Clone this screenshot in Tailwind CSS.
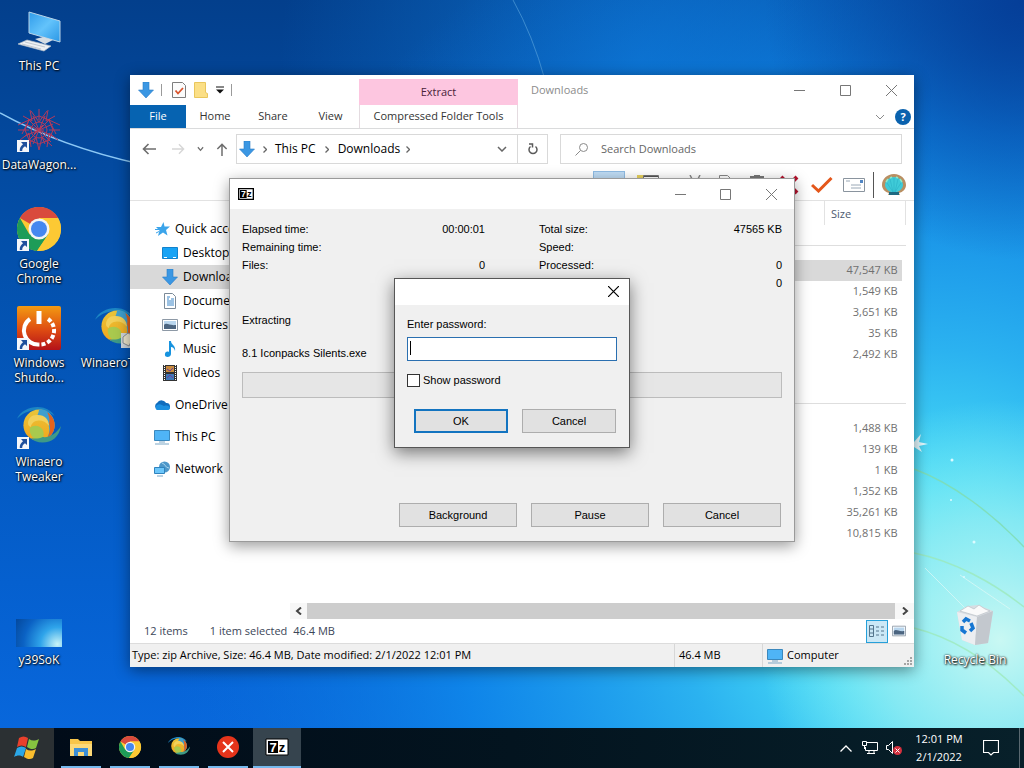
<!DOCTYPE html>
<html lang="en">
<head>
  <meta charset="UTF-8" />
  <meta name="viewport" content="width=device-width, initial-scale=1.0"/>
  <title>Downloads</title>
  <!-- Tailwind CSS -->
  <script src="https://cdn.jsdelivr.net/npm/@tailwindcss/browser@4"></script>
</head>
<body class="h-screen overflow-hidden flex flex-col bg-[#0358b4] font-['Open_Sans','Noto_Sans',sans-serif] text-xs text-[#1a1a1a]">

  <!-- Shared icons -->
  <svg class="absolute size-0" aria-hidden="true">
    <defs>
      <linearGradient id="screen" x1="0" y1="0" x2="1" y2="1">
        <stop offset="0" stop-color="#2f9bea"/><stop offset=".5" stop-color="#63c3fb"/><stop offset="1" stop-color="#2b97e6"/>
      </linearGradient>
      <linearGradient id="swirlGold" x1="0" y1="0" x2="0" y2="1">
        <stop offset="0" stop-color="#e8c53a"/><stop offset="1" stop-color="#f3a51c"/>
      </linearGradient>
      <linearGradient id="power" x1="0" y1="0" x2="0" y2="1">
        <stop offset="0" stop-color="#f39a12"/><stop offset=".55" stop-color="#dd4a12"/><stop offset="1" stop-color="#b3121a"/>
      </linearGradient>
    </defs>
    <symbol id="arrow" viewBox="0 0 16 16">
      <path d="M5 0h6v8h4.500L8 16 .5 8H5z" fill="#3b97e3" stroke="#2a7cc7" stroke-width=".6"/>
    </symbol>
    <symbol id="chrome" viewBox="0 0 48 48">
      <circle cx="24" cy="24" r="22" fill="#fcc934"/>
      <path d="M24 24 4.900 13A22 22 0 0 1 43.100 13H24z" fill="#d94a3d"/>
      <path d="M4.900 13A22 22 0 0 0 22 45.900L33 29.500 24 24 14.500 29.500z" fill="#1e9c58"/>
      <path d="M22 45.900A22 22 0 0 0 43.100 13H24L33.500 29.500z" fill="#fcc934"/>
      <circle cx="24" cy="24" r="10.500" fill="#f4f4f4"/>
      <circle cx="24" cy="24" r="8" fill="#4587f0"/>
    </symbol>
    <symbol id="winaero" viewBox="0 0 48 48">
      <path d="M0 15C4 5 18 0 29 3c6 2 10 5 12 9-8-6-16-8-24-6C10 7 4 11 0 15z" fill="#1c86c4"/>
      <circle cx="24" cy="22" r="17" fill="url(#swirlGold)"/>
      <path d="M24 5c10-1 17 7 17 17 0 6-3 11-8 14 3-6 3-12 0-17-3-4-7-6-12-5 2-4 3-7 3-9z" fill="#3f9fce"/>
      <path d="M33 8c5 3 8 8 8 14s-3 11-8 14c3-5 4-11 2-16 1-4 0-8-2-12z" fill="#e4621c"/>
      <path d="M12 20c0-6 5-10 11-9 7 0 12 5 12 12-3-4-7-6-11-6-5 0-8 3-9 7-2-1-3-2-3-4z" fill="#f2d05a"/>
      <path d="M14 25c4-4 11-3 14 2 2 4 1 9-1 12-8 0-14-6-13-14z" fill="#a9c94e"/>
      <path d="M28 35c8 1 15-4 20-12-2 12-10 18-20 18-6 0-10-2-13-5 4 1 9 1 13-1z" fill="#3f9a86"/>
    </symbol>
    <symbol id="shortcut" viewBox="0 0 12 12">
      <path d="M0 0h12v12H0z" fill="#f4f6fa"/>
      <path d="M4 2h6v6L8 6.200C6 7.500 5.200 8.800 5.200 11H2.800C2.500 8.300 3.700 6 6 4.200z" fill="#1f4f9c"/>
    </symbol>
    <symbol id="monitor" viewBox="0 0 16 16">
      <path d="M.5 1.500h15v10H.5z" fill="#4fb4f6" stroke="#3b88bd"/>
      <path d="M5 13h6M1 15h14" stroke="#7aa7c6"/>
    </symbol>
    <symbol id="picture" viewBox="0 0 16 12">
      <path d="M.5.500h15v11H.5z" fill="#fff" stroke="#8d99a6"/>
      <path d="M2 2h12v8H2z" fill="#b9d6ee"/><path d="M2 6c3-3 5 1 12 0v4H2z" fill="#4c6580"/>
    </symbol>
  </svg>

  <!-- Desktop -->
  <main class="relative flex-1 min-h-0">
    <!-- Wallpaper -->
    <svg class="absolute inset-0 size-full" viewBox="0 0 1024 728" preserveAspectRatio="none" aria-hidden="true">
      <defs>
        <linearGradient id="sky" x1="0" y1="0" x2="0" y2="1">
          <stop offset="0" stop-color="#033f8c"/><stop offset=".35" stop-color="#0350ab"/><stop offset=".8" stop-color="#0560cf"/><stop offset="1" stop-color="#0867dc"/>
        </linearGradient>
        <radialGradient id="top" gradientUnits="userSpaceOnUse" cx="640" cy="60" r="360">
          <stop offset="0" stop-color="#0b69c2"/><stop offset="1" stop-color="#0b69c2" stop-opacity="0"/>
        </radialGradient>
        <radialGradient id="corner" gradientUnits="userSpaceOnUse" cx="1024" cy="0" r="260">
          <stop offset="0" stop-color="#053e98"/><stop offset="1" stop-color="#053e98" stop-opacity="0"/>
        </radialGradient>
        <radialGradient id="glow" gradientUnits="userSpaceOnUse" cx="930" cy="600" r="760">
          <stop offset="0" stop-color="#6aeef8"/><stop offset=".15" stop-color="#48dcf6"/><stop offset=".33" stop-color="#2bb2f0"/><stop offset=".62" stop-color="#108aec" stop-opacity=".85"/><stop offset="1" stop-color="#0a70da" stop-opacity="0"/>
        </radialGradient>
        <radialGradient id="shine" gradientUnits="userSpaceOnUse" cx="1000" cy="640" r="240">
          <stop offset="0" stop-color="#c9f8f3"/><stop offset=".5" stop-color="#98edf2" stop-opacity=".75"/><stop offset="1" stop-color="#7feef5" stop-opacity="0"/>
        </radialGradient>
      </defs>
      <path d="M0 0h1024v728H0z" fill="url(#sky)"/>
      <path d="M0 0h1024v728H0z" fill="url(#top)"/>
      <path d="M0 0h1024v728H0z" fill="url(#glow)"/>
      <path d="M0 0h1024v728H0z" fill="url(#shine)"/>
      <path d="M0 0h1024v728H0z" fill="url(#corner)"/>
      <g fill="none">
        <path d="M0 113c40 22 85 39 140 51" stroke="#8cc8f5" stroke-width="1.500"/>
        <path d="M513 0q20 36 32 80" stroke="#5fa8e0" opacity=".6"/>
        <path d="M914 469c38 14 78 44 110 78" stroke="#7fdcae" stroke-width="1.500" opacity=".8"/>
        <path d="M914 553c40 8 80 30 110 54M914 628c40 10 78 35 110 68" stroke="#9be8b4" stroke-width="1.500" opacity=".7"/>
        <path d="M925 568l45 45M960 575l50 34" stroke="#dffaf6" opacity=".7"/>
      </g>
      <path d="M914 442l7-8-2 8 9 2-9 2 3 6-8-5z" fill="#e4faff"/>
      <g fill="#dcfbff"><circle cx="952" cy="460" r="1.500"/><circle cx="974" cy="542" r="1.500"/><circle cx="964" cy="577" r="1"/><circle cx="951" cy="500" r="1"/></g>
    </svg>

    <!-- Desktop icons -->
    <ul class="absolute top-0 left-0 grid grid-flow-col grid-rows-[repeat(7,99px)] auto-cols-[78px] text-center text-white leading-[15px] [text-shadow:1px_1px_2px_#000,0_0_2px_#000]">
      <li class="row-start-1 col-start-1 pt-[9px] flex flex-col items-center gap-[5px]">
        <svg class="size-11 shrink-0" viewBox="0 0 44 44">
          <path d="M12 3 43 12v21L12 24z" fill="url(#screen)" stroke="#b9d4e8"/>
          <path d="M18 30l8-2 10 3-8 4z" fill="#d5dde4"/>
          <path d="M1 35l9-4 24 6-7 5z" fill="#eef1f4" stroke="#b5bfc9" stroke-width=".7"/>
          <path d="M5 35l19 5M8 33l20 5" stroke="#aeb8c2" stroke-width=".7"/>
        </svg>
        <span>This PC</span>
      </li>
      <li class="row-start-2 col-start-1 pt-[9px] flex flex-col items-center gap-[5px]">
        <span class="relative size-11 shrink-0">
          <svg class="size-11" viewBox="0 0 44 44" fill="none" stroke="#b23a5c">
            <path d="M22 1v11M14 3l8 11 8-11M6 8l9 5-2-11M38 8l-9 5 2-11M1 17l11-5-7 14M43 17l-11-5 7 14M1 22h11M43 22H32M3 32l9-7 2 14M41 32l-9-7-2 14M9 38l10-9 3 13 3-13 10 9"/>
            <path d="M10 10l24 24M34 10 10 34M12 12l10-4 10 4 4 10-4 10-10 4-10-4-4-10z"/>
            <circle cx="22" cy="22" r="8"/><path d="M18 18l8 8M26 17l-9 9M17 22h10M8 16l28 12M8 28l28-12M16 8l12 28M28 8 16 36"/>
          </svg>
          <svg class="absolute left-0 bottom-0 size-3"><use href="#shortcut"/></svg>
        </span>
        <span>DataWagon...</span>
      </li>
      <li class="row-start-3 col-start-1 pt-[9px] flex flex-col items-center gap-[5px]">
        <span class="relative size-11 shrink-0">
          <svg class="size-11" viewBox="2 2 44 44"><use href="#chrome" width="48" height="48"/></svg>
          <svg class="absolute left-0 bottom-0 size-3"><use href="#shortcut"/></svg>
        </span>
        <span>Google<br/>Chrome</span>
      </li>
      <li class="row-start-4 col-start-1 pt-[9px] flex flex-col items-center gap-[5px]">
        <span class="relative size-11 shrink-0">
          <svg class="size-11" viewBox="0 0 44 44" fill="none" stroke="#fff">
            <rect width="44" height="44" rx="2" fill="url(#power)" stroke="none"/>
            <path d="M13 13a14 14 0 0 0 9 25.500" stroke-width="4"/>
            <path d="M31 13a14 14 0 0 1-9 25.500" stroke-width="4" stroke-dasharray="4 2"/>
            <path d="M22 5v13" stroke-width="5"/>
          </svg>
          <svg class="absolute left-0 bottom-0 size-3"><use href="#shortcut"/></svg>
        </span>
        <span>Windows<br/>Shutdo...</span>
      </li>
      <li class="row-start-5 col-start-1 pt-[9px] flex flex-col items-center gap-[5px]">
        <span class="relative size-11 shrink-0">
          <svg class="size-11"><use href="#winaero"/></svg>
          <svg class="absolute left-0 bottom-0 size-3"><use href="#shortcut"/></svg>
        </span>
        <span>Winaero<br/>Tweaker</span>
      </li>
      <li class="row-start-7 col-start-1 pt-[9px] flex flex-col items-center gap-[5px]">
        <span class="h-11 shrink-0 flex items-end">
          <span class="w-[46px] h-7 bg-[radial-gradient(circle_at_90%_90%,#c8f4f8,#2fa4ea_35%,#0b62c4_70%,#04489c)]"></span>
        </span>
        <span>y39SoK</span>
      </li>
      <li class="row-start-4 col-start-2 pt-[9px] flex flex-col items-center gap-[5px]">
        <span class="relative size-11 shrink-0">
          <svg class="size-11"><use href="#winaero"/></svg>
          <svg class="absolute right-0 bottom-0 size-5" viewBox="0 0 20 20"><path d="M2 3h14v15H2z" fill="#cfd6dc"/><path d="M4 7l5-4 6 3-5 10-6-3z" fill="#f1ead0" stroke="#8b9097"/></svg>
        </span>
        <span>WinaeroTw...</span>
      </li>
    </ul>
    <div class="absolute top-[594px] right-[10px] w-[78px] pt-[9px] flex flex-col items-center gap-[5px] text-white leading-[15px] [text-shadow:1px_1px_2px_#000,0_0_2px_#000]">
      <svg class="size-11" viewBox="0 0 44 44">
        <path d="M4 9 15 3l10-1 15 6-5 32-13 2L9 37z" fill="#d9dde2"/>
        <path d="M4 9l20 5-2 28L9 37z" fill="#eceef1"/><path d="M24 14 40 8l-5 32-13 2z" fill="#c3c8ce"/>
        <path d="M7 8l8-5 6 3 5-4 6 4 5 2-13 5z" fill="#fafafa" stroke="#b4bac1" stroke-width=".6"/>
        <path d="M10 19l3-3 4 2M18 20l2 5-3 3M13 30l-4-3 0-4" fill="none" stroke="#1676d2" stroke-width="3.500"/>
      </svg>
      <span>Recycle Bin</span>
    </div>

    <!-- Explorer window -->
    <section aria-label="Downloads" class="absolute left-[130px] top-[75px] w-[784px] bg-white flex flex-col shadow-[0_3px_14px_rgba(0,0,0,0.45)]">
      <header class="flex h-[30px] items-center pl-2">
        <svg class="size-4"><use href="#arrow"/></svg>
        <span class="ml-[7px] w-px h-3 bg-[#9a9a9a]"></span>
        <svg class="ml-2.5 w-[14px] h-4" viewBox="0 0 14 16"><path d="M.5.500h10l3 3v12H.5z" fill="#fbfbfb" stroke="#7d7d7d"/><path d="M3.500 8.500l2.500 3L11 6" fill="none" stroke="#d9532c" stroke-width="1.800"/></svg>
        <svg class="ml-2 w-[14px] h-4" viewBox="0 0 14 16"><path d="M.5.500h11v10l2 1v4H.5z" fill="#fbdf86" stroke="#e9c65c"/></svg>
        <svg class="ml-2 size-2" viewBox="0 0 8 8"><path d="M0 1h8" stroke="#111"/><path d="M0 3.500h8l-4 4z" fill="#111"/></svg>
        <span class="ml-[7px] w-px h-3 bg-[#9a9a9a]"></span>
        <span class="ml-[127px] mt-1 w-[159px] h-[26px] bg-[#fdc6e0] flex items-center justify-center text-[11px] text-[#4a2238]">Extract</span>
        <span class="ml-[13px] text-[11px] text-[#8c8c8c]">Downloads</span>
        <div class="ml-auto flex h-7 text-[#777]">
          <button aria-label="Minimize" class="w-[46px] flex items-center justify-center"><svg class="size-[11px]" viewBox="0 0 11 11" stroke="currentColor"><path d="M0 5.500h11"/></svg></button>
          <button aria-label="Maximize" class="w-[46px] flex items-center justify-center"><svg class="size-[11px]" viewBox="0 0 11 11" fill="none" stroke="currentColor"><path d="M.5.500h10v10H.5z"/></svg></button>
          <button aria-label="Close" class="w-[46px] flex items-center justify-center"><svg class="size-[11px]" viewBox="0 0 11 11" stroke="currentColor"><path d="M0 0l11 11M11 0 0 11"/></svg></button>
        </div>
      </header>

      <!-- Ribbon tabs -->
      <nav class="flex h-6 items-stretch border-b border-[#dadbdc] text-[11px] text-[#333]">
        <button class="w-14 bg-[#0663b1] text-white">File</button>
        <button class="w-[58px]">Home</button>
        <button class="w-[58px]">Share</button>
        <button class="w-[57px]">View</button>
        <button class="w-[159px] border-x border-[#e4dbe0]">Compressed Folder Tools</button>
        <svg class="ml-auto mr-2.5 w-2.5 self-center" viewBox="0 0 10 6" fill="none" stroke="#8a8a8a"><path d="M1 1l4 4 4-4"/></svg>
        <button aria-label="Help" class="mr-[3px] size-4 self-center rounded-full bg-[#0a62ae] text-white font-bold leading-4">?</button>
      </nav>

      <!-- Address bar -->
      <div class="flex h-10 items-center pr-3">
        <div class="flex w-[106px] shrink-0 items-center pl-3 gap-3 text-[#6d6d6d]">
          <svg class="w-[14px] h-3" viewBox="0 0 14 12" fill="none" stroke="currentColor" stroke-width="1.600"><path d="M14 6H1.500M6.500 1l-5 5 5 5"/></svg>
          <svg class="ml-1 w-[13px] h-3" viewBox="0 0 14 12" fill="none" stroke="#d6d6d6" stroke-width="1.500"><path d="M0 6h12.500M7.500 1l5 5-5 5"/></svg>
          <svg class="w-[7px] h-1.5" viewBox="0 0 8 6" fill="none" stroke="currentColor" stroke-width="1.400"><path d="M1 1l3 3.500L7 1"/></svg>
          <svg class="w-3 h-[13px]" viewBox="0 0 12 14" fill="none" stroke="currentColor" stroke-width="1.600"><path d="M6 14V1.500M1 6.500l5-5 5 5"/></svg>
        </div>
        <div class="flex w-[312px] h-[30px] shrink-0 items-center border border-[#d9d9d9] pl-0.5">
          <svg class="size-4"><use href="#arrow"/></svg>
          <svg class="mx-2 w-1 h-[7px]" viewBox="0 0 4 7" fill="none" stroke="#666" stroke-width="1.300"><path d="M.5.500l3 3-3 3"/></svg>
          <a href="#" class="text-black">This PC</a>
          <svg class="mx-[9px] w-1 h-[7px]" viewBox="0 0 4 7" fill="none" stroke="#666" stroke-width="1.300"><path d="M.5.500l3 3-3 3"/></svg>
          <a href="#" class="text-black">Downloads</a>
          <svg class="mx-1.5 w-1 h-[7px]" viewBox="0 0 4 7" fill="none" stroke="#666" stroke-width="1.300"><path d="M.5.500l3 3-3 3"/></svg>
          <svg class="ml-auto mr-2.5 w-2.5 h-1.5" viewBox="0 0 10 6" fill="none" stroke="#666" stroke-width="1.500"><path d="M1 1l4 4 4-4"/></svg>
          <button aria-label="Refresh" class="w-[30px] h-full border-l border-[#d9d9d9] flex items-center justify-center">
            <svg class="size-3" viewBox="0 0 12 12" fill="none" stroke="#5a5a5a" stroke-width="1.500"><path d="M8.500 3.500a4 4 0 1 1-5 0M2 1h3.500v3.500"/></svg>
          </button>
        </div>
        <label class="ml-3 flex flex-1 h-[30px] items-center border border-[#d9d9d9] pl-3.5 gap-3">
          <svg class="size-3.5" viewBox="0 0 14 14" fill="none" stroke="#8a8a8a"><circle cx="8.500" cy="5.500" r="4"/><path d="M5.500 8.500.5 13.500"/></svg>
          <input type="search" aria-label="Search Downloads" placeholder="Search Downloads" class="flex-1 text-[11px] outline-none placeholder:text-[#666]"/>
        </label>
      </div>

      <!-- Classic toolbar -->
      <div class="flex h-8 items-center justify-end gap-3 border-b border-[#e2e2e2] pr-2">
        <span class="w-8 h-7 bg-[#bfdcf5] border border-[#8fbce4]"></span>
        <svg class="w-[22px] h-5" viewBox="0 0 22 20"><path d="M0 0h8v20H0z" fill="#e8d25e"/><path d="M6.500.500h15v18h-15z" fill="#fff" stroke="#777"/><path d="M7 1.500h14" stroke="#555"/></svg>
        <svg class="ml-4 w-4 h-5" viewBox="0 0 16 20" stroke="#888" stroke-width="1.500"><path d="M3 0l8 16M13 0 5 16"/></svg>
        <svg class="w-5 h-5" viewBox="0 0 20 20" fill="#fff" stroke="#888"><path d="M4.500.500h8l3 3v14h-11z"/></svg>
        <svg class="w-5 h-5" viewBox="0 0 20 20"><path d="M3 1h4V0h6v1h4v18H3z" fill="#777"/></svg>
        <svg class="size-5" viewBox="0 0 20 20" stroke="#b5122d" stroke-width="4"><path d="M2 2l16 16M18 2 2 18"/></svg>
        <svg class="-mr-0.5 w-[22px] h-4" viewBox="0 0 22 16" fill="none" stroke="#e4571b" stroke-width="3"><path d="M1 8l6.500 6L20.500 1"/></svg>
        <svg class="w-[22px] h-[14px]" viewBox="0 0 22 14" fill="none"><path d="M.5.500h21v13H.5z" fill="#fff" stroke="#8a949e"/><path d="M3 3h4M8 7h10M8 10h10" stroke="#9aa8b6"/><path d="M17 2h3v3h-3z" fill="#5186c4"/></svg>
        <div class="flex items-center gap-2 -ml-1">
          <span class="w-px h-[26px] bg-[#555]"></span>
          <svg class="size-6" viewBox="0 0 24 24"><path d="M12 1c7 0 12 5 12 11 0 4-3 7-7 8l1 2H6l1-2c-4-1-7-4-7-8C0 6 5 1 12 1z" fill="#b98f62"/><path d="M12 4c5 0 9 4 9 8 0 3-3 6-6 7H9c-3-1-6-4-6-7 0-4 4-8 9-8z" fill="#3fcbd8"/><path d="M12 5v14M8 6l3 13M16 6l-3 13M5 10l6 9M19 10l-6 9" stroke="#2db4c8" stroke-width=".7"/><path d="M4 9l2-3M8 5l2-1M14 4l2 1M18 6l2 3" stroke="#8be8c8" stroke-width="1.500"/><path d="M7 19h10v3H7z" fill="#1f6a82"/></svg>
        </div>
      </div>

      <div class="flex">
        <!-- Navigation pane -->
        <ul class="w-40 shrink-0 pt-4 text-black [&>li]:flex [&>li]:h-6 [&>li]:items-center [&>li]:gap-[5px] [&>li]:whitespace-nowrap">
          <li class="pl-6"><svg class="size-4" viewBox="0 0 16 16"><path d="M9.500 1l1 4.500H16L12 9l1.500 5.500L9 11.500 4 15l1.500-5.500L2 6h5z" fill="#3ba4ea"/><path d="M1 8.500h4M2 12l3-1.500" stroke="#3ba4ea"/></svg>Quick access</li>
          <li class="pl-8"><svg class="size-4" viewBox="0 0 16 16"><path d="M.5 2.500h15v11H.5z" fill="#17a3f5" stroke="#1282cc"/><path d="M2 12.500h3M11 12.500h3" stroke="#fff"/></svg>Desktop</li>
          <li class="pl-8 bg-[#d9d9d9]"><svg class="size-4"><use href="#arrow"/></svg>Downloads</li>
          <li class="pl-8"><svg class="size-4" viewBox="0 0 16 16"><path d="M2.500.500h8l3 3v12h-11z" fill="#fff" stroke="#7b8a98"/><path d="M5 4h3M5 6h2M9 6h3M5 8h7M5 10h7M5 12h7" stroke="#3a86c8"/></svg>Documents</li>
          <li class="pl-8"><svg class="w-4 h-3"><use href="#picture"/></svg>Pictures</li>
          <li class="pl-8"><svg class="size-4" viewBox="0 0 16 16"><path d="M7 0h2c0 4 5 4 4 10-1-3-2-4-4-4v7c0 4-7 4-6 0 0-2 2-3 4-2z" fill="#1793df"/></svg>Music</li>
          <li class="pl-8"><svg class="size-4" viewBox="0 0 16 16"><path d="M1 0h14v16H1z" fill="#333"/><path d="M4 1h8v6H4z" fill="#c88a3e"/><path d="M4 9h8v6H4z" fill="#3f78b8"/><path d="M5 4l3 2 3-3M5 13l3-3 3 3" stroke="#6b3fa0" fill="none"/><path d="M2.500 0v16M13.500 0v16" stroke="#fff" stroke-dasharray="1 1"/></svg>Videos</li>
          <li class="mt-2 pl-6"><svg class="size-4" viewBox="0 0 16 16"><path d="M4 13a4 4 0 0 1-.5-7.500A5 5 0 0 1 12 6a3.500 3.500 0 0 1 1 7z" fill="#0f6cbd"/><path d="M3 13a3 3 0 0 1 0-5c3-2 5 0 7 1 3-1 6 0 6 2 0 1-1 2-2 2z" fill="#1b8fe0"/></svg>OneDrive</li>
          <li class="mt-2 pl-6"><svg class="size-4"><use href="#monitor"/></svg>This PC</li>
          <li class="mt-2 pl-6"><svg class="size-4" viewBox="0 0 16 16"><circle cx="10.500" cy="6" r="5.500" fill="#4d97c9"/><path d="M8 2c4 1 3 5 7 5" stroke="#a9d6ef" fill="none"/><path d="M.5 6.500h10v6H.5z" fill="#6cc6fa" stroke="#2f83bd"/><path d="M3 15h6" stroke="#7aa7c6"/></svg>Network</li>
        </ul>

        <!-- File list -->
        <div class="flex-1 min-w-0">
          <div class="min-h-[402px] pr-2">
            <table class="w-full table-fixed border-collapse text-right text-[11px] text-[#707070]">
              <colgroup><col/><col class="w-[77px]"/><col class="w-1"/></colgroup>
              <thead>
                <tr class="h-6">
                  <td></td>
                  <th scope="col" class="border-l border-[#e2e2e2] pl-1.5 pt-0.5 text-left font-normal text-[#4c5a70]">Size</th>
                  <td class="border-r border-[#e2e2e2]"></td>
                </tr>
              </thead>
              <tbody class="[&>tr]:h-[21px]">
                <tr><td colspan="3" class="pb-[14px]"><div class="h-[21px] border-b border-[#dedede]"></div></td></tr>
                <tr><td class="bg-[#d9d9d9]"></td><td class="bg-[#d9d9d9] pr-1">47,547 KB</td><td></td></tr>
                <tr><td></td><td class="pr-1">1,549 KB</td><td></td></tr>
                <tr><td></td><td class="pr-1">3,651 KB</td><td></td></tr>
                <tr><td></td><td class="pr-1">35 KB</td><td></td></tr>
                <tr><td></td><td class="pr-1">2,492 KB</td><td></td></tr>
              </tbody>
              <tbody class="[&>tr]:h-[21px]">
                <tr><td colspan="3" class="pb-[14px]"><div class="h-[39px] border-b border-[#dedede]"></div></td></tr>
                <tr><td></td><td class="pr-1">1,488 KB</td><td></td></tr>
                <tr><td></td><td class="pr-1">139 KB</td><td></td></tr>
                <tr><td></td><td class="pr-1">1 KB</td><td></td></tr>
                <tr><td></td><td class="pr-1">1,352 KB</td><td></td></tr>
                <tr><td></td><td class="pr-1">35,261 KB</td><td></td></tr>
                <tr><td></td><td class="pr-1">10,815 KB</td><td></td></tr>
              </tbody>
            </table>
          </div>
          <!-- Horizontal scroll bar -->
          <div class="flex h-4 items-center bg-[#f7f7f7]">
            <svg class="mx-[5px] w-[7px] h-2" viewBox="0 0 7 8" fill="none" stroke="#444" stroke-width="2"><path d="M6 .5 2 4l4 3.500"/></svg>
            <span class="flex-1 h-full bg-[#cdcdcd]"></span>
            <svg class="ml-[7px] mr-[5px] w-[7px] h-2" viewBox="0 0 7 8" fill="none" stroke="#444" stroke-width="2"><path d="M1 .5 5 4 1 7.500"/></svg>
          </div>
        </div>
      </div>

      <!-- Status bars -->
      <div class="flex h-6 items-center pl-[14px] pr-[7px] text-[11px] text-[#3b4658]">
        <span>12 items</span>
        <span class="ml-[22px]">1 item selected</span>
        <span class="ml-1.5">46.4 MB</span>
        <button aria-label="Details" class="ml-auto w-[22px] h-[23px] bg-[#cbe8f6] border border-[#26a0da] flex items-center justify-center">
          <svg class="w-4 h-3" viewBox="0 0 16 12" fill="none" stroke="#54758c"><path d="M.5.500h4v11h-4zM.5 4h4M.5 8h4M7 2h3M12 2h3M7 6h3M12 6h3M7 10h3M12 10h3"/></svg>
        </button>
        <button aria-label="Large icons" class="ml-1 w-[15px]"><svg class="w-[14px] h-3"><use href="#picture"/></svg></button>
      </div>
      <footer class="flex h-6 items-center border-t border-[#dcdcdc] bg-[#f0f0f0] text-[11px] text-black">
        <span class="flex-1 pl-0.5">Type: zip Archive, Size: 46.4 MB, Date modified: 2/1/2022 12:01 PM</span>
        <span class="w-[88px] h-full flex items-center border-l border-[#d7d7d7] pl-1">46.4 MB</span>
        <span class="w-[152px] h-full flex items-center gap-1 border-l border-[#d7d7d7] pl-1">
          <svg class="size-4"><use href="#monitor"/></svg>Computer
          <svg class="ml-auto mr-0.5 mt-2.5 size-2" viewBox="0 0 8 8" fill="#a5a5a5"><path d="M6 0h2v2H6zM3 3h2v2H3zM6 3h2v2H6zM0 6h2v2H0zM3 6h2v2H3zM6 6h2v2H6z"/></svg>
        </span>
      </footer>
    </section>

    <!-- 7-Zip progress window -->
    <section aria-label="Extracting" class="absolute left-[229px] top-[178px] w-[566px] flex flex-col border border-[#9a9a9a] bg-[#f0f0f0] font-['Liberation_Sans',Arial,sans-serif] text-[11px] text-black shadow-[0_4px_14px_rgba(0,0,0,0.4)]">
      <header class="flex h-[30px] items-center bg-white pl-2">
        <svg class="w-4 h-3" viewBox="0 0 24 18" font-family="Liberation Sans" font-weight="700" font-size="13" text-anchor="middle">
          <path d="M1 1h22v16H1z" fill="#fff" stroke="#000" stroke-width="2"/><path d="M3 3h10v12H3z"/>
          <text x="8" y="14" fill="#fff">7</text><text x="17" y="14">z</text>
        </svg>
        <div class="ml-auto flex h-7 text-[#777]">
          <button aria-label="Minimize" class="w-[45px] flex items-center justify-center"><svg class="size-[11px]" viewBox="0 0 11 11" stroke="currentColor"><path d="M0 5.500h11"/></svg></button>
          <button aria-label="Maximize" class="w-[45px] flex items-center justify-center"><svg class="size-[11px]" viewBox="0 0 11 11" fill="none" stroke="currentColor"><path d="M.5.500h10v10H.5z"/></svg></button>
          <button aria-label="Close" class="w-[46px] flex items-center justify-center"><svg class="size-[11px]" viewBox="0 0 11 11" stroke="currentColor"><path d="M0 0l11 11M11 0 0 11"/></svg></button>
        </div>
      </header>
      <div class="px-3 pt-[11px] pb-[14px]">
        <div class="grid grid-cols-2 gap-x-[54px] leading-[18px]">
          <dl class="grid grid-cols-[1fr_auto] auto-rows-[18px]">
            <dt>Elapsed time:</dt><dd>00:00:01</dd>
            <dt>Remaining time:</dt><dd></dd>
            <dt>Files:</dt><dd class="text-right">0</dd>
          </dl>
          <dl class="grid grid-cols-[1fr_auto] auto-rows-[18px]">
            <dt>Total size:</dt><dd>47565 KB</dd>
            <dt>Speed:</dt><dd></dd>
            <dt>Processed:</dt><dd class="text-right">0</dd>
            <dt>Compressed size:</dt><dd class="text-right">0</dd>
          </dl>
        </div>
        <p class="mt-[19px] leading-[18px]">Extracting</p>
        <p class="mt-[15px] leading-[18px]">8.1 Iconpacks Silents.exe</p>
        <div role="progressbar" aria-label="Progress" class="mt-2.5 h-[26px] border border-[#bcbcbc] bg-[#e6e6e6]"></div>
        <div class="mt-[105px] flex justify-end gap-[14px] pr-px">
          <button class="w-[118px] h-6 border border-[#adadad] bg-[#e1e1e1]">Background</button>
          <button class="w-[118px] h-6 border border-[#adadad] bg-[#e1e1e1]">Pause</button>
          <button class="w-[118px] h-6 border border-[#adadad] bg-[#e1e1e1]">Cancel</button>
        </div>
      </div>
    </section>

    <!-- Password dialog -->
    <form role="dialog" aria-label="Enter password" onsubmit="return false" class="absolute left-[394px] top-[278px] w-[236px] flex flex-col border border-[#565656] bg-[#f0f0f0] font-['Liberation_Sans',Arial,sans-serif] text-[11px] text-black shadow-[0_5px_16px_rgba(0,0,0,0.5)]">
      <header class="flex h-[26px] justify-end bg-white">
        <button type="button" aria-label="Close" class="w-[31px] h-6 flex items-center justify-center"><svg class="size-[11px]" viewBox="0 0 11 11" stroke="currentColor" stroke-width="1.200"><path d="M0 0l11 11M11 0 0 11"/></svg></button>
      </header>
      <div class="px-3 pt-2.5 pb-[14px]">
        <label for="password" class="block leading-[18px]">Enter password:</label>
        <div class="relative mt-1">
          <input id="password" type="password" class="block w-full h-6 border border-[#2a6fb0] bg-white px-1 outline-none"/>
          <span class="absolute left-[3px] top-1 w-px h-[14px] bg-black"></span>
        </div>
        <label class="mt-2.5 flex h-[18px] items-center gap-[3px]">
          <input type="checkbox" class="appearance-none size-[13px] border border-[#333] bg-white"/>
          Show password
        </label>
        <div class="mt-5 flex justify-end gap-[14px] pr-px">
          <button type="submit" class="w-[94px] h-6 border-2 border-[#1374c0] bg-[#e1e1e1]">OK</button>
          <button type="button" class="w-[94px] h-6 border border-[#adadad] bg-[#e1e1e1]">Cancel</button>
        </div>
      </div>
    </form>
  </main>

  <!-- Taskbar -->
  <footer class="flex h-10 shrink-0 bg-linear-to-r from-[#010b18] via-[#03141f] to-[#08202a] text-white">
    <button aria-label="Start" class="w-[54px] bg-[#2b3033] flex items-center justify-center">
      <svg class="size-[26px]" viewBox="0 0 26 26"><path d="M5 3c3-2 6-2 9 0l-2 9c-3-2-6-2-9 0z" fill="#e8402c"/><path d="M15 4c3 2 6 2 10 0l-3 9c-3 2-6 1-9-1z" fill="#86c440"/><path d="M3 13c3-2 6-2 9 0l-3 9c-2-2-6-2-9 0z" fill="#2ba6e6"/><path d="M12 14c3 2 6 2 10 0l-3 9c-3 2-6 1-9-1z" fill="#f9bd2e"/></svg>
    </button>
    <div class="ml-[7px] flex gap-[9px] [&>button]:flex [&>button]:items-center [&>button]:justify-center [&>button]:w-10 [&>button]:border-b-2 [&>button]:border-[#76b9ed]">
      <button aria-label="File Explorer"><svg class="w-[22px] h-[19px]" viewBox="0 0 22 19"><path d="M0 1h8l2 2h12v15H0z" fill="#f8c64a"/><path d="M0 6h22v12H0z" fill="#fcd978"/><path d="M4 10h14v8h-4v-4H8v4H4z" fill="#3d8fd6"/></svg></button>
      <button aria-label="Google Chrome"><svg class="size-6"><use href="#chrome"/></svg></button>
      <button aria-label="Winaero Tweaker"><svg class="size-[22px]"><use href="#winaero"/></svg></button>
      <button aria-label="Shutdown"><svg class="size-[22px]" viewBox="0 0 22 22"><circle cx="11" cy="11" r="11" fill="#e5341b"/><path d="M6 6l10 10M16 6 6 16" stroke="#fff" stroke-width="2"/></svg></button>
    </div>
    <button aria-label="7-Zip" class="ml-[5px] w-12 bg-[#36444e] border-b-2 border-[#76b9ed] flex items-center justify-center">
      <svg class="w-6 h-[18px]" viewBox="0 0 24 18" font-family="Liberation Sans" font-weight="700" font-size="13" text-anchor="middle">
        <path d="M1 1h22v16H1z" fill="#fff" stroke="#000"/><path d="M3 3h10v12H3z"/>
        <text x="8" y="14" fill="#fff">7</text><text x="17" y="14">z</text>
      </svg>
    </button>

    <div class="ml-auto flex items-center">
      <svg class="w-3 h-[7px]" viewBox="0 0 12 7" fill="none" stroke="#fff" stroke-width="1.300"><path d="M.5 6.500l5.500-5.500 5.500 5.500"/></svg>
      <svg class="ml-2.5 w-4 h-[14px]" viewBox="0 0 16 14" fill="none" stroke="#fff"><path d="M5 1.500h10.500v8H3.500V6M7 9.500v3M12 9.500v3M5 12.500h8M.5.500h4v4h-4zM2.500 5v3"/></svg>
      <svg class="ml-2 w-4 h-[14px]" viewBox="0 0 16 14" fill="none" stroke="#fff"><path d="M.5 4.500h2l4-4v12l-4-4h-2z"/><circle cx="11.500" cy="9.500" r="4.500" fill="#d5303e" stroke="none"/><path d="M9.500 7.500l4 4M13.500 7.500l-4 4"/></svg>
      <div class="w-[74px] text-center text-[11px] leading-[18px]">
        <p>12:01 PM</p>
        <p>2/1/2022</p>
      </div>
      <svg class="ml-[7px] w-4 h-4" viewBox="0 0 16 16" fill="none" stroke="#fff" stroke-width="1.200"><path d="M.5.500h15v12h-5L8 15l-2.500-2.500h-5z"/></svg>
      <span class="ml-5 mr-1 w-px h-10 bg-[#5a6870]"></span>
    </div>
  </footer>
</body>
</html>
